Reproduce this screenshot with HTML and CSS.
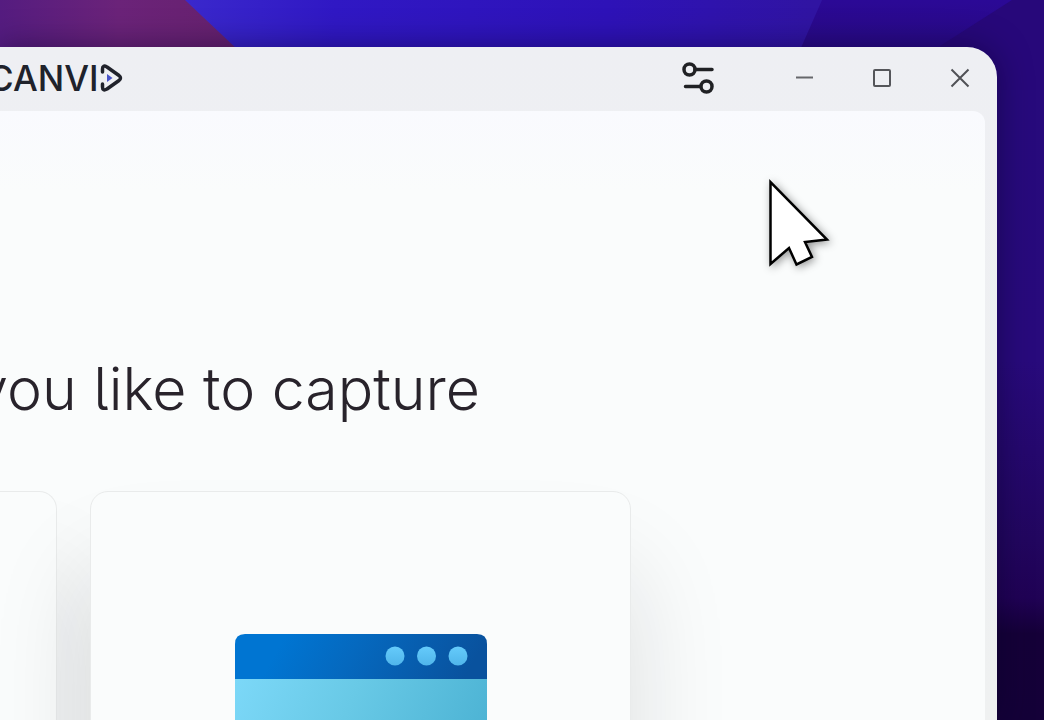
FILE: index.html
```
<!DOCTYPE html>
<html lang="en">
<head>
  <meta charset="UTF-8">
  <title>Canvid</title>
  <meta name="viewport" content="width=device-width, initial-scale=1">
  <link rel="stylesheet" href="styles.css">
</head>
<body>
  <!-- desktop wallpaper -->
  <svg class="wallpaper" viewBox="0 0 1044 720" preserveAspectRatio="none" aria-hidden="true">
    <defs>
      <linearGradient id="blue" x1="0" x2="1" y1="0" y2="0">
        <stop offset="0.18" stop-color="#3a28cc"/>
        <stop offset="0.32" stop-color="#3018c4"/>
        <stop offset="0.58" stop-color="#2e12b8"/>
        <stop offset="0.78" stop-color="#3014a2"/>
      </linearGradient>
      <linearGradient id="plum" x1="0" x2="1" y1="0" y2="0">
        <stop offset="0" stop-color="#551c80"/>
        <stop offset="0.5" stop-color="#6b2379"/>
        <stop offset="1" stop-color="#67216e"/>
      </linearGradient>
      <linearGradient id="side" x1="0" x2="0" y1="0" y2="1">
        <stop offset="0" stop-color="#2b0996"/>
        <stop offset="0.1" stop-color="#270a7c"/>
        <stop offset="0.5" stop-color="#280a7c"/>
        <stop offset="0.75" stop-color="#22065f"/>
        <stop offset="0.83" stop-color="#200255"/>
        <stop offset="0.88" stop-color="#150038"/>
        <stop offset="1" stop-color="#140038"/>
      </linearGradient>
    </defs>
    <rect width="1044" height="720" fill="url(#blue)"/>
    <path d="M0 0H185L238 50H0Z" fill="url(#plum)"/>
    <path d="M822 0H1044V720H780V50H800Z" fill="url(#side)"/>
    <path d="M1012 0H1044V90H940V46Z" fill="#27087a"/>
  </svg>

  <div class="window">
    <header class="titlebar">
      <div class="brand">
        <span class="brand-name">CANVI</span>
        <svg class="brand-mark" width="24" height="30" viewBox="0 0 24 30" aria-hidden="true">
          <path d="M3.500 9V6Q3.500 1.500 8 4L20 12.500Q23 15 20 17.500L8 26Q3.500 28.500 3.500 24V21" fill="none" stroke="#20222b" stroke-width="3.500" stroke-linecap="round" stroke-linejoin="round"/>
          <path d="M8 11L13.500 15L8 19Z" fill="#4954c8"/>
        </svg>
      </div>
      <button class="tool settings" type="button" aria-label="Settings">
        <svg width="32" height="32" viewBox="0 0 32 32" fill="none" stroke="#202124" stroke-width="3.500" stroke-linecap="round">
          <circle cx="7.500" cy="7.500" r="5.500"/>
          <path d="M13 7.500H30M3.500 24.500H18"/>
          <circle cx="24.500" cy="24.500" r="5.500"/>
        </svg>
      </button>
      <div class="controls">
        <button class="tool" type="button" aria-label="Minimize">
          <svg width="20" height="20" viewBox="0 0 20 20" fill="none" stroke="#66676b" stroke-width="2">
            <path d="M2 9.500H19"/>
          </svg>
        </button>
        <button class="tool" type="button" aria-label="Maximize">
          <svg width="20" height="20" viewBox="0 0 20 20" fill="none" stroke="#55565a" stroke-width="2">
            <rect x="2" y="2" width="16" height="16" rx="1"/>
          </svg>
        </button>
        <button class="tool" type="button" aria-label="Close">
          <svg width="20" height="20" viewBox="0 0 20 20" fill="none" stroke="#505155" stroke-width="2">
            <path d="M1.500 1.500L18.500 18.500M18.500 1.500L1.500 18.500"/>
          </svg>
        </button>
      </div>
    </header>

    <main class="panel">
      <h1 class="question">you like to capture</h1>
      <div class="cards">
        <div class="card"></div>
        <div class="card card-app">
          <svg class="app-icon" width="252" height="240" viewBox="0 0 252 240" role="img" aria-label="Window">
            <defs>
              <linearGradient id="bar" x1="0" x2="1" y1="0" y2="0.1">
                <stop offset="0.2" stop-color="#0075d2"/>
                <stop offset="0.5" stop-color="#0569bf"/>
                <stop offset="1" stop-color="#09529e"/>
              </linearGradient>
              <linearGradient id="pane" x1="0" x2="1" y1="0" y2="0.35">
                <stop offset="0" stop-color="#7cd8f8"/>
                <stop offset="0.45" stop-color="#68c9e6"/>
                <stop offset="1" stop-color="#4bb2d3"/>
              </linearGradient>
              <linearGradient id="dot" x1="0" x2="0" y1="0" y2="1">
                <stop offset="0" stop-color="#65cbfb"/>
                <stop offset="1" stop-color="#50b5ea"/>
              </linearGradient>
            </defs>
            <rect y="44" width="252" height="196" fill="url(#pane)"/>
            <path d="M0 45V10Q0 0 10 0H242Q252 0 252 10V45Z" fill="url(#bar)"/>
            <circle cx="160" cy="22" r="9.500" fill="url(#dot)"/>
            <circle cx="191.500" cy="22" r="9.500" fill="url(#dot)"/>
            <circle cx="223" cy="22" r="9.500" fill="url(#dot)"/>
          </svg>
        </div>
      </div>
    </main>
  </div>

  <svg class="cursor" width="100" height="110" viewBox="0 0 100 110" aria-hidden="true">
    <path d="M20.500 17V99L39 83L46.500 99.500L62 92L55 77L77 74.500Z" fill="#fff" stroke="#000" stroke-width="2.500"/>
  </svg>
</body>
</html>
```

FILE: styles.css
```
* { box-sizing: border-box; }
body {
  font-family: Inter, "Liberation Sans", sans-serif;
  background-color: #270a7c;
  margin: 0;
  height: 100vh;
  padding: 47px 47px 0 0;
  overflow: hidden;
  position: relative;
}
.wallpaper {
  position: absolute;
  top: 0;
  left: 0;
  width: 100%;
  height: 100%;
}

/* app window */
.window {
  position: relative;
  display: flex;
  flex-direction: column;
  height: 100%;
  padding-right: 12px;
  background: linear-gradient(#eeeff3, #eff1f1);
  border-top-right-radius: 30px;
  box-shadow: 0 0 32px rgba(10, 0, 40, 0.5);
}
.titlebar {
  display: flex;
  align-items: center;
  flex: none;
  height: 64px;
  padding-bottom: 2px;
  margin-right: -7px;
}
.brand {
  display: flex;
  align-items: center;
  margin-left: -12px;
  margin-right: auto;
  color: #20222b;
}
.brand-name {
  font-size: 35px;
  font-weight: 500;
  line-height: 40px;
}
.brand-mark {
  display: block;
}
.tool {
  display: flex;
  align-items: center;
  justify-content: center;
  width: 64px;
  height: 48px;
  padding: 0;
  border: none;
  border-radius: 6px;
  background: none;
  cursor: pointer;
}
.tool:hover {
  background: #e0e2e8;
}
.settings {
  margin-right: 42px;
}
.controls {
  display: flex;
  gap: 14px;
}

/* content */
.panel {
  display: flex;
  flex-direction: column;
  flex: 1;
  min-height: 0;
  padding-top: 240px;
  background: linear-gradient(#f9fafe, #fafcfc 80px);
  border-top-right-radius: 12px;
  overflow: hidden;
}
.question {
  align-self: flex-end;
  margin: 0 505px 64px 0;
  font-size: 59px;
  font-weight: 300;
  line-height: 76px;
  white-space: nowrap;
  color: #28232b;
  font-feature-settings: "cv05";
}
.cards {
  display: flex;
  flex: none;
  gap: 33px;
  height: 600px;
  margin-right: 354px;
}
.card {
  flex: 1;
  border: 1px solid #e9ebeb;
  border-left: none;
  border-radius: 0 18px 18px 0;
  background: #fafcfc;
  box-shadow: 0 80px 100px rgba(20, 24, 30, 0.13);
}
.card-app {
  flex: 0 0 541px;
  padding-top: 142px;
  border-left: 1px solid #e9ebeb;
  border-radius: 18px;
}
.app-icon {
  display: block;
  margin: 0 auto;
}

.cursor {
  position: absolute;
  left: 750px;
  top: 165px;
  filter: drop-shadow(2px 2px 4px rgba(0, 0, 0, 0.4));
  pointer-events: none;
}
```
